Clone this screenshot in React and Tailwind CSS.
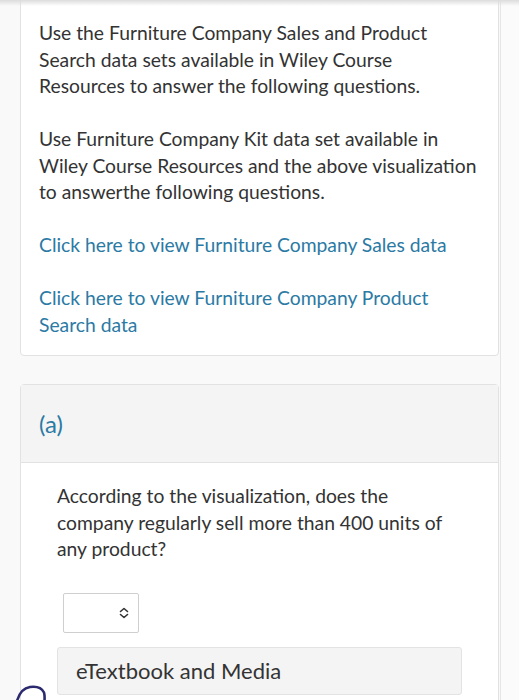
import React from "react";

export default function App() {
  const font = { fontFamily: "Lato, 'Noto Sans', sans-serif" };
  return (
    <div className="relative w-[519px] h-[700px] overflow-hidden bg-[#f9f9f9] text-[#333]" style={font}>
      <div className="absolute left-0 right-0 top-0 h-[6px] bg-gradient-to-b from-[#dcdcdc] to-transparent z-10" />
      <div className="absolute right-0 top-0 bottom-0 w-[19px] border-l border-[#e6e6e6] bg-[#fbfbfb]" />

      <div className="mx-[20px] -mt-[2px] bg-white border border-[#e2e2e2] rounded-[4px] pl-[18px] pr-[18px] pt-[21px] pb-[17px] text-[19.3px] leading-[26.5px]">
        <p>Use the Furniture Company Sales and Product Search data sets available in Wiley Course Resources to answer the following questions.</p>
        <p className="mt-[26.5px]">Use Furniture Company Kit data set available in Wiley Course Resources and the above visualization to answerthe following questions.</p>
        <p className="mt-[26.5px] text-[#2b7aa4]">Click here to view Furniture Company Sales data</p>
        <p className="mt-[26.5px] text-[#2b7aa4]">Click here to view Furniture Company Product Search data</p>
      </div>

      <div className="mx-[20px] mt-[28px] bg-white border border-[#e2e2e2] rounded-t-[4px] h-[400px]">
        <div className="h-[78px] bg-[#f4f4f4] border-b border-[#e2e2e2] flex items-center pl-[18px] text-[24px] text-[#2b7aa4]">
          (a)
        </div>
        <div className="px-[36px] pt-[20px]">
          <p className="text-[19.3px] leading-[26.5px]">
            According to the visualization, does the company regularly sell more than 400 units of any product?
          </p>
          <div className="mt-[30px] ml-[6px] w-[76px] h-[40px] border border-[#cfcfcf] rounded-[2px] bg-white flex items-center justify-end pr-[9px]">
            <svg width="10" height="12" viewBox="0 0 10 12" fill="none" stroke="#333" strokeWidth="1.6" strokeLinecap="round" strokeLinejoin="round">
              <path d="M1.5 4.5 L5 1.5 L8.5 4.5" />
              <path d="M1.5 7.5 L5 10.5 L8.5 7.5" />
            </svg>
          </div>
          <div className="mt-[14px] h-[48px] bg-[#f4f4f4] border border-[#e3e3e3] rounded-[3px] flex items-center pl-[18px] text-[22px] text-[#333]">
            eTextbook and Media
          </div>
        </div>
      </div>

      <svg className="absolute left-0 top-[680px]" width="60" height="20" viewBox="0 680 60 20" fill="none">
        <path d="M17 701 C 19 694, 23 688, 30 687 C 37 686, 42 688.5, 44 692.5 C 45 696, 44.5 699, 44.5 701" stroke="#2c2a6e" strokeWidth="2.6" strokeLinecap="round" />
      </svg>
    </div>
  );
}
